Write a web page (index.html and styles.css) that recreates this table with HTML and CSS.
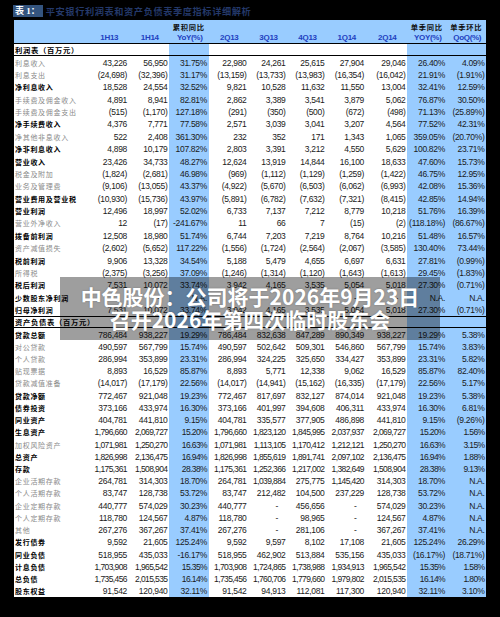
FILE: index.html
```html
<!DOCTYPE html>
<html lang="zh-CN">
<head>
<meta charset="utf-8">
<title>平安银行利润表和资产负债表季度指标详细解析</title>
<link rel="stylesheet" href="styles.css">
</head>
<body>
<div class="page">
  <div class="title"><span class="tag">表 1：</span><span class="ttl">平安银行利润表和资产负债表季度指标详细解析</span></div>
  <div class="tbl">
    <div class="hd">
      <div class="hr hr1"><span></span><span></span><span></span><span>累积同比</span><span></span><span></span><span></span><span></span><span></span><span>单季同比</span><span>单季环比</span></div>
      <div class="hr hr2"><span></span><span>1H13</span><span>1H14</span><span>YoY(%)</span><span>2Q13</span><span>3Q13</span><span>4Q13</span><span>1Q14</span><span>2Q14</span><span>YOY(%)</span><span>QoQ(%)</span></div>
    </div>
    <div class="r sec"><span class="l">利润表（百万元）</span><span></span><span></span><span></span><span></span><span></span><span></span><span></span><span></span><span></span><span></span></div>
    <div class="r"><span class="l">利息收入</span><span>43,226</span><span>56,950</span><span>31.75%</span><span>22,980</span><span>24,261</span><span>25,615</span><span>27,904</span><span>29,046</span><span>26.40%</span><span>4.09%</span></div>
    <div class="r"><span class="l">利息支出</span><span>(24,698)</span><span>(32,396)</span><span>31.17%</span><span>(13,159)</span><span>(13,733)</span><span>(13,983)</span><span>(16,354)</span><span>(16,042)</span><span>21.91%</span><span>(1.91%)</span></div>
    <div class="r k"><span class="l">净利息收入</span><span>18,528</span><span>24,554</span><span>32.52%</span><span>9,821</span><span>10,528</span><span>11,632</span><span>11,550</span><span>13,004</span><span>32.41%</span><span>12.59%</span></div>
    <div class="r"><span class="l">手续费及佣金收入</span><span>4,891</span><span>8,941</span><span>82.81%</span><span>2,862</span><span>3,389</span><span>3,541</span><span>3,879</span><span>5,062</span><span>76.87%</span><span>30.50%</span></div>
    <div class="r"><span class="l">手续费及佣金支出</span><span>(515)</span><span>(1,170)</span><span>127.18%</span><span>(291)</span><span>(350)</span><span>(500)</span><span>(672)</span><span>(498)</span><span>71.13%</span><span>(25.89%)</span></div>
    <div class="r k"><span class="l">净手续费收入</span><span>4,376</span><span>7,771</span><span>77.58%</span><span>2,571</span><span>3,039</span><span>3,041</span><span>3,207</span><span>4,564</span><span>77.52%</span><span>42.31%</span></div>
    <div class="r"><span class="l">净其他非息收入</span><span>522</span><span>2,408</span><span>361.30%</span><span>232</span><span>352</span><span>171</span><span>1,343</span><span>1,065</span><span>359.05%</span><span>(20.70%)</span></div>
    <div class="r k"><span class="l">净非利息收入</span><span>4,898</span><span>10,179</span><span>107.82%</span><span>2,803</span><span>3,391</span><span>3,212</span><span>4,550</span><span>5,629</span><span>100.82%</span><span>23.71%</span></div>
    <div class="r k"><span class="l">营业收入</span><span>23,426</span><span>34,733</span><span>48.27%</span><span>12,624</span><span>13,919</span><span>14,844</span><span>16,100</span><span>18,633</span><span>47.60%</span><span>15.73%</span></div>
    <div class="r"><span class="l">税金及附加</span><span>(1,824)</span><span>(2,681)</span><span>46.98%</span><span>(969)</span><span>(1,112)</span><span>(1,129)</span><span>(1,259)</span><span>(1,422)</span><span>46.75%</span><span>12.95%</span></div>
    <div class="r"><span class="l">业务及管理费</span><span>(9,106)</span><span>(13,055)</span><span>43.37%</span><span>(4,922)</span><span>(5,670)</span><span>(6,503)</span><span>(6,062)</span><span>(6,993)</span><span>42.08%</span><span>15.36%</span></div>
    <div class="r k"><span class="l">营业费用及营业税</span><span>(10,930)</span><span>(15,736)</span><span>43.97%</span><span>(5,891)</span><span>(6,782)</span><span>(7,632)</span><span>(7,321)</span><span>(8,415)</span><span>42.85%</span><span>14.94%</span></div>
    <div class="r k"><span class="l">营业利润</span><span>12,496</span><span>18,997</span><span>52.02%</span><span>6,733</span><span>7,137</span><span>7,212</span><span>8,779</span><span>10,218</span><span>51.76%</span><span>16.39%</span></div>
    <div class="r"><span class="l">营业外净收入</span><span>12</span><span>(17)</span><span>-241.67%</span><span>11</span><span>66</span><span>7</span><span>(15)</span><span>(2)</span><span>(118.18%)</span><span>(86.67%)</span></div>
    <div class="r k"><span class="l">拨备前利润</span><span>12,508</span><span>18,980</span><span>51.74%</span><span>6,744</span><span>7,203</span><span>7,219</span><span>8,764</span><span>10,216</span><span>51.48%</span><span>16.57%</span></div>
    <div class="r"><span class="l">资产减值损失</span><span>(2,602)</span><span>(5,652)</span><span>117.22%</span><span>(1,556)</span><span>(1,724)</span><span>(2,564)</span><span>(2,067)</span><span>(3,585)</span><span>130.40%</span><span>73.44%</span></div>
    <div class="r k"><span class="l">税前利润</span><span>9,906</span><span>13,328</span><span>34.54%</span><span>5,188</span><span>5,479</span><span>4,655</span><span>6,697</span><span>6,631</span><span>27.81%</span><span>(0.99%)</span></div>
    <div class="r"><span class="l">所得税</span><span>(2,375)</span><span>(3,256)</span><span>37.09%</span><span>(1,246)</span><span>(1,314)</span><span>(1,120)</span><span>(1,643)</span><span>(1,613)</span><span>29.45%</span><span>(1.83%)</span></div>
    <div class="r k"><span class="l">税后利润</span><span>7,531</span><span>10,072</span><span>33.74%</span><span>3,942</span><span>4,165</span><span>3,535</span><span>5,054</span><span>5,018</span><span>27.30%</span><span>(0.71%)</span></div>
    <div class="r k"><span class="l">少数股东净利润</span><span class="d">-</span><span class="d">-</span><span>N.A.</span><span class="d">-</span><span class="d">-</span><span class="d">-</span><span class="d">-</span><span class="d">-</span><span>N.A.</span><span>N.A.</span></div>
    <div class="r k"><span class="l">归母净利润</span><span>7,531</span><span>10,072</span><span>33.74%</span><span>3,942</span><span>4,165</span><span>3,535</span><span>5,054</span><span>5,018</span><span>27.30%</span><span>(0.71%)</span></div>
    <div class="r sec sec2 b2"><span class="l">资产负债表（百万元）</span><span></span><span></span><span></span><span></span><span></span><span></span><span></span><span></span><span></span><span></span></div>
    <div class="r k b2"><span class="l">贷款总额</span><span>786,484</span><span>938,227</span><span>19.29%</span><span>786,484</span><span>832,638</span><span>847,289</span><span>890,349</span><span>938,227</span><span>19.29%</span><span>5.38%</span></div>
    <div class="r b2"><span class="l">对公贷款</span><span>490,597</span><span>567,799</span><span>15.74%</span><span>490,597</span><span>502,642</span><span>509,301</span><span>546,860</span><span>567,799</span><span>15.74%</span><span>3.83%</span></div>
    <div class="r b2"><span class="l">个人贷款</span><span>286,994</span><span>353,899</span><span>23.31%</span><span>286,994</span><span>324,225</span><span>325,650</span><span>334,427</span><span>353,899</span><span>23.31%</span><span>5.82%</span></div>
    <div class="r b2"><span class="l">贴现票据</span><span>8,893</span><span>16,529</span><span>85.87%</span><span>8,893</span><span>5,771</span><span>12,338</span><span>9,062</span><span>16,529</span><span>85.87%</span><span>82.40%</span></div>
    <div class="r b2"><span class="l">贷款减值准备</span><span>(14,017)</span><span>(17,179)</span><span>22.56%</span><span>(14,017)</span><span>(14,941)</span><span>(15,162)</span><span>(16,335)</span><span>(17,179)</span><span>22.56%</span><span>5.17%</span></div>
    <div class="r k b2"><span class="l">贷款净额</span><span>772,467</span><span>921,048</span><span>19.23%</span><span>772,467</span><span>817,697</span><span>832,127</span><span>874,014</span><span>921,048</span><span>19.23%</span><span>5.38%</span></div>
    <div class="r k b2"><span class="l">债券投资</span><span>373,166</span><span>433,974</span><span>16.30%</span><span>373,166</span><span>401,997</span><span>394,608</span><span>406,311</span><span>433,974</span><span>16.30%</span><span>6.81%</span></div>
    <div class="r k b2"><span class="l">同业资产</span><span>404,781</span><span>441,810</span><span>9.15%</span><span>404,781</span><span>335,577</span><span>377,905</span><span>486,898</span><span>441,810</span><span>9.15%</span><span>(9.26%)</span></div>
    <div class="r k b2 big"><span class="l">生息资产</span><span>1,796,660</span><span>2,069,727</span><span>15.20%</span><span>1,796,660</span><span>1,823,120</span><span>1,845,995</span><span>2,037,937</span><span>2,069,727</span><span>15.20%</span><span>1.56%</span></div>
    <div class="r b2 big"><span class="l">加权风险资产</span><span>1,071,981</span><span>1,250,270</span><span>16.63%</span><span>1,071,981</span><span>1,113,105</span><span>1,170,412</span><span>1,212,121</span><span>1,250,270</span><span>16.63%</span><span>3.15%</span></div>
    <div class="r k b2 big"><span class="l">总资产</span><span>1,826,998</span><span>2,136,475</span><span>16.94%</span><span>1,826,998</span><span>1,855,619</span><span>1,891,741</span><span>2,097,102</span><span>2,136,475</span><span>16.94%</span><span>1.88%</span></div>
    <div class="r k b2 big"><span class="l">存款</span><span>1,175,361</span><span>1,508,904</span><span>28.38%</span><span>1,175,361</span><span>1,252,366</span><span>1,217,002</span><span>1,382,649</span><span>1,508,904</span><span>28.38%</span><span>9.13%</span></div>
    <div class="r b2"><span class="l">企业活期存款</span><span>264,781</span><span>314,303</span><span>18.70%</span><span>264,781</span><span class="w">1,039,884</span><span>275,775</span><span class="w">1,145,420</span><span>314,303</span><span>18.70%</span><span>N.A.</span></div>
    <div class="r b2"><span class="l">个人活期存款</span><span>83,747</span><span>128,738</span><span>53.72%</span><span>83,747</span><span>212,482</span><span>104,500</span><span>237,229</span><span>128,738</span><span>53.72%</span><span>N.A.</span></div>
    <div class="r b2"><span class="l">企业定期存款</span><span>440,777</span><span>574,029</span><span>30.23%</span><span>440,777</span><span class="d">-</span><span>456,656</span><span class="d">-</span><span>574,029</span><span>30.23%</span><span>N.A.</span></div>
    <div class="r b2"><span class="l">个人定期存款</span><span>118,780</span><span>124,567</span><span>4.87%</span><span>118,780</span><span class="d">-</span><span>98,965</span><span class="d">-</span><span>124,567</span><span>4.87%</span><span>N.A.</span></div>
    <div class="r b2"><span class="l">其他</span><span>267,276</span><span>367,267</span><span>37.41%</span><span>267,276</span><span class="d">-</span><span>281,106</span><span class="d">-</span><span>367,267</span><span>37.41%</span><span>N.A.</span></div>
    <div class="r k b2"><span class="l">发行债券</span><span>9,592</span><span>21,605</span><span>125.24%</span><span>9,592</span><span>9,597</span><span>8,102</span><span>17,108</span><span>21,605</span><span>125.24%</span><span>26.29%</span></div>
    <div class="r k b2"><span class="l">同业负债</span><span>518,955</span><span>435,033</span><span>-16.17%</span><span>518,955</span><span>462,902</span><span>513,884</span><span>535,156</span><span>435,033</span><span>(16.17%)</span><span>(18.71%)</span></div>
    <div class="r k b2 big"><span class="l">计息负债</span><span>1,703,908</span><span>1,965,542</span><span>15.35%</span><span>1,703,908</span><span>1,724,865</span><span>1,738,988</span><span>1,934,913</span><span>1,965,542</span><span>15.35%</span><span>1.58%</span></div>
    <div class="r k b2 big"><span class="l">总负债</span><span>1,735,456</span><span>2,015,535</span><span>16.14%</span><span>1,735,456</span><span>1,760,706</span><span>1,779,660</span><span>1,979,802</span><span>2,015,535</span><span>16.14%</span><span>1.80%</span></div>
    <div class="r k b2"><span class="l">股东权益</span><span>91,542</span><span>120,940</span><span>32.11%</span><span>91,542</span><span>94,913</span><span>112,081</span><span>117,300</span><span>120,940</span><span>32.11%</span><span>3.10%</span></div>
  </div>
</div>
<div class="overlay">
  <p>中色股份：公司将于2026年9月23日</p>
  <p>召开2026年第四次临时股东会</p>
</div>
</body>
</html>
```

FILE: styles.css
```css
* {
  box-sizing: border-box;
  margin: 0;
  padding: 0;
}

html,
body {
  background: #000;
}

body {
  width: 500px;
  height: 617px;
  overflow: hidden;
  position: relative;
  font-family: "Liberation Sans", Arial, sans-serif;
}

.page {
  padding: 5px 0 0 14px;
}

.title {
  height: 12px;
  display: flex;
  align-items: center;
  gap: 3px;
  margin-left: -1px;
  margin-bottom: 3px;
}

.tag {
  height: 12px;
  padding: 0 3px 0 2px;
  background: #34547e;
  color: #fff;
  font: bold 9px/12px "Liberation Serif", "Noto Sans CJK SC", serif;
}

.ttl {
  color: #24396a;
  font: bold 9.2px/12px "Noto Sans CJK SC", sans-serif;
  letter-spacing: 0.6px;
}

.tbl {
  width: 472px;
}

.hd {
  height: 24px;
  background: #99ccff;
  border-bottom: 1px solid #000;
}

.hr,
.r {
  display: grid;
  grid-template-columns: 74px 40.5px 40.5px 39.5px 39.5px 39px 39px 39.5px 41.5px 39.5px 39.5px;
}

.hr {
  height: 11.5px;
  align-items: center;
}

.hr span {
  text-align: center;
  white-space: nowrap;
}

.hr1 span {
  font: bold 7.3px/1 "Noto Sans CJK SC", sans-serif;
  letter-spacing: 0.7px;
  color: #111;
  padding-top: 3px;
}

.hr2 span {
  font: bold 8px/1 "Liberation Sans", Arial, sans-serif;
  letter-spacing: -0.3px;
  color: #2140c0;
  padding-left: 2px;
  padding-top: 1px;
}

.r {
  height: 12.38px;
  background: #fff;
}

.r.b2 {
  height: 12.23px;
}

.r > span {
  height: 100%;
  display: flex;
  align-items: center;
  justify-content: flex-end;
  padding-right: 1.5px;
  font-size: 8.5px;
  letter-spacing: -0.3px;
  color: #1a1a1a;
  white-space: nowrap;
}

.r > span:nth-child(4),
.r > span:nth-child(10),
.r > span:nth-child(11) {
  background: #99ccff;
}

.r > .l {
  justify-content: flex-start;
  padding-left: 1px;
  font-family: "Noto Sans CJK SC", sans-serif;
  font-size: 7px;
  letter-spacing: 0.7px;
  color: #8a8a8a;
}

.r.k > .l {
  color: #000;
  font-weight: 700;
}

.sec {
  border-bottom: 1px solid #000;
}

.sec2 {
  border-top: 1px solid #000;
}

.r.sec > .l {
  color: #000;
  font-weight: 700;
  font-size: 7.3px;
}

.big > span,
.r > .w {
  letter-spacing: -0.6px;
}

.r > .d {
  padding-right: 9px;
}

.overlay {
  position: absolute;
  left: 60px;
  top: 277px;
  width: 380px;
  height: 63px;
  padding-top: 8px;
  background: rgba(0, 0, 0, 0.38);
  text-align: center;
  color: #fff;
  font: bold 21px/23px "Noto Sans CJK SC", sans-serif;
  text-shadow: 0 0 2px rgba(0, 0, 0, 0.25);
  white-space: nowrap;
}
```
